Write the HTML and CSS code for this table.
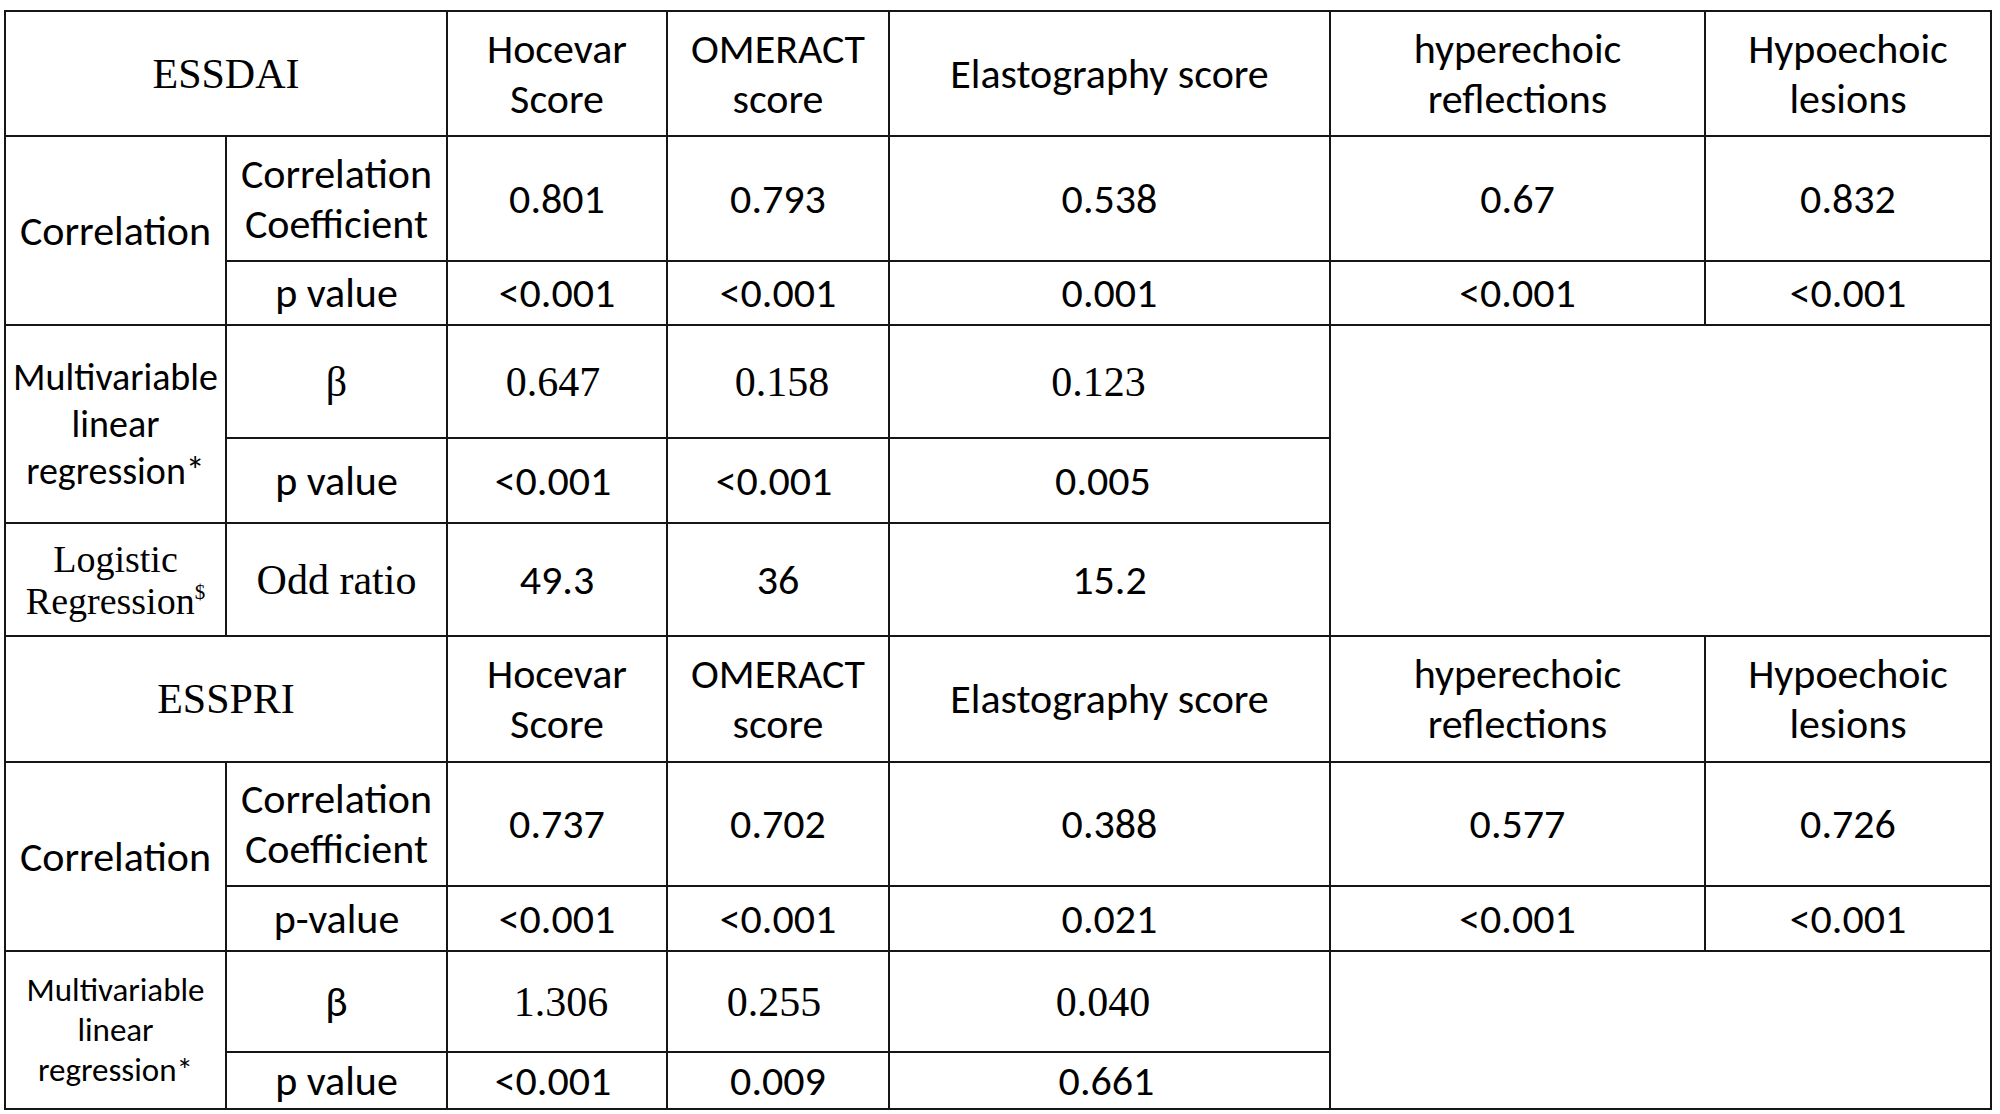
FILE: index.html
```html
<!DOCTYPE html>
<html lang="en">
<head>
<meta charset="utf-8">
<title>ESSDAI / ESSPRI correlations</title>
<link rel="stylesheet" href="styles.css">
</head>
<body>
<div class="page">
<table class="stats">
  <colgroup>
    <col class="w-a"><col class="w-b"><col class="w-c"><col class="w-d"><col class="w-e"><col class="w-f"><col class="w-g">
  </colgroup>
  <tbody>
    <tr class="r-head">
      <td colspan="2" class="serif">ESSDAI</td>
      <td>Hocevar<br>Score</td>
      <td>OMERACT<br>score</td>
      <td>Elastography score</td>
      <td>hyperechoic<br>reflections</td>
      <td>Hypoechoic<br>lesions</td>
    </tr>
    <tr class="r-coef1">
      <td rowspan="2">Correlation</td>
      <td>Correlation<br>Coefficient</td>
      <td>0.801</td>
      <td>0.793</td>
      <td>0.538</td>
      <td>0.67</td>
      <td>0.832</td>
    </tr>
    <tr class="r-p1">
      <td>p value</td>
      <td>&lt;0.001</td>
      <td>&lt;0.001</td>
      <td>0.001</td>
      <td>&lt;0.001</td>
      <td>&lt;0.001</td>
    </tr>
    <tr class="r-beta1">
      <td rowspan="2" class="multi">Multivariable<br>linear<br>regression*</td>
      <td class="serif">β</td>
      <td class="serif nudge-l">0.647</td>
      <td class="serif nudge-r">0.158</td>
      <td class="serif shift-xl">0.123</td>
      <td colspan="2" rowspan="3" class="empty"></td>
    </tr>
    <tr class="r-p2">
      <td>p value</td>
      <td class="nudge-l">&lt;0.001</td>
      <td class="nudge-l">&lt;0.001</td>
      <td class="shift">0.005</td>
    </tr>
    <tr class="r-or">
      <td class="serif logi">Logistic<br>Regression<sup>$</sup></td>
      <td class="serif">Odd ratio</td>
      <td>49.3</td>
      <td>36</td>
      <td>15.2</td>
    </tr>
    <tr class="r-head2">
      <td colspan="2" class="serif">ESSPRI</td>
      <td>Hocevar<br>Score</td>
      <td>OMERACT<br>score</td>
      <td>Elastography score</td>
      <td>hyperechoic<br>reflections</td>
      <td>Hypoechoic<br>lesions</td>
    </tr>
    <tr class="r-coef2">
      <td rowspan="2">Correlation</td>
      <td>Correlation<br>Coefficient</td>
      <td>0.737</td>
      <td>0.702</td>
      <td>0.388</td>
      <td>0.577</td>
      <td>0.726</td>
    </tr>
    <tr class="r-p3">
      <td>p-value</td>
      <td>&lt;0.001</td>
      <td>&lt;0.001</td>
      <td>0.021</td>
      <td>&lt;0.001</td>
      <td>&lt;0.001</td>
    </tr>
    <tr class="r-beta2">
      <td rowspan="2" class="multi small">Multivariable<br>linear<br>regression*</td>
      <td>β</td>
      <td class="serif nudge-r">1.306</td>
      <td class="serif nudge-l">0.255</td>
      <td class="serif shift">0.040</td>
      <td colspan="2" rowspan="2" class="empty"></td>
    </tr>
    <tr class="r-p4">
      <td>p value</td>
      <td class="nudge-l">&lt;0.001</td>
      <td>0.009</td>
      <td class="shift-s">0.661</td>
    </tr>
  </tbody>
</table>
</div>
</body>
</html>
```
FILE: styles.css
```css
html, body {
  margin: 0;
  padding: 0;
  background: #ffffff;
}

.page {
  padding: 10px 0 0 4px;
}

.stats {
  border-collapse: collapse;
  table-layout: fixed;
  width: 1988px;
  font-family: "Carlito", "Lato", sans-serif;
  font-size: 42px;
  line-height: 50px;
  color: #000;
}

.w-a { width: 221px; }
.w-b { width: 221px; }
.w-c { width: 220px; }
.w-d { width: 222px; }
.w-e { width: 441px; }
.w-f { width: 375px; }
.w-g { width: 286px; }

.stats td {
  border: 2px solid #161616;
  padding: 0;
  text-align: center;
  vertical-align: middle;
  white-space: nowrap;
  overflow: visible;
}

.r-head { height: 125px; }
.r-coef1 { height: 125px; }
.r-p1 { height: 64px; }
.r-beta1 { height: 113px; }
.r-p2 { height: 85px; }
.r-or { height: 113px; }
.r-head2 { height: 126px; }
.r-coef2 { height: 124px; }
.r-p3 { height: 65px; }
.r-beta2 { height: 101px; }
.r-p4 { height: 57px; }

.stats .serif {
  font-family: "Liberation Serif", "Times New Roman", serif;
  font-size: 42px;
}

.stats .multi {
  font-size: 38px;
  line-height: 47px;
}

.stats .multi.small {
  font-size: 33px;
  line-height: 40px;
}

.stats .logi {
  font-size: 38px;
  line-height: 42px;
}

.logi sup {
  font-size: 21px;
  line-height: 0;
  vertical-align: 15px;
}

.stats td.nudge-l {
  padding-right: 8px;
}

.stats td.nudge-r {
  padding-left: 8px;
}

.stats td.shift {
  padding-right: 13px;
}

.stats td.shift-s {
  padding-right: 6px;
}

.stats td.shift-xl {
  padding-right: 22px;
}

.empty {
  background: #ffffff;
}
```
